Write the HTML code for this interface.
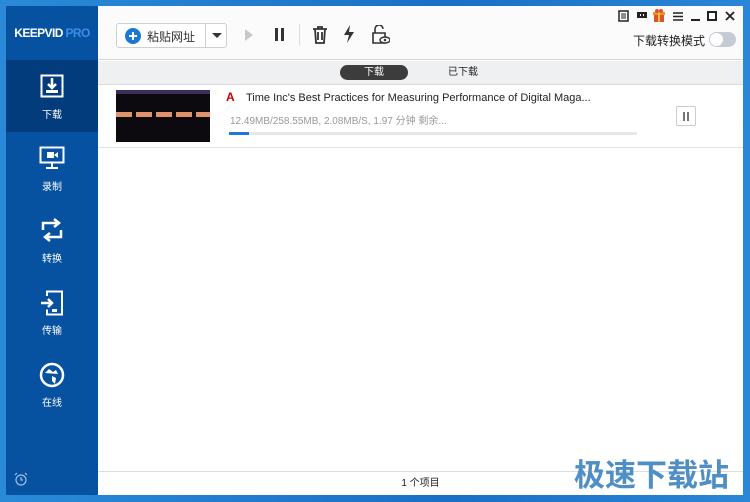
<!DOCTYPE html>
<html><head><meta charset="utf-8"><style>
*{margin:0;padding:0;box-sizing:border-box}
body{width:750px;height:502px;overflow:hidden;position:relative;font-family:"Liberation Sans","Noto Sans CJK SC",sans-serif;background:linear-gradient(90deg,#2a8ad8,#1a6fc6 60%,#2a86d6);}
.side{position:absolute;left:6px;top:6px;width:92px;height:489px;background:#0651a0}
.logo{position:absolute;left:0;top:0;width:92px;height:54px;color:#fff;font-weight:bold;font-size:12px;text-align:center;line-height:54px;letter-spacing:-0.6px;font-family:"Liberation Sans",sans-serif}
.logo span{color:#3d8ee8}
.nav{position:absolute;left:0;width:92px;height:72px;color:#fff;font-size:10px;text-align:center}
.nav.act{background:#033c7c}
.nav svg{display:block;margin:0 auto}
.main{position:absolute;left:98px;top:6px;width:645px;height:489px;background:#fff}
.top{position:absolute;left:0;top:0;width:645px;height:54px;background:#fbfbfb;border-bottom:1px solid #d8d8d8}
.tabs{position:absolute;left:0;top:55px;width:645px;height:24px;background:#eef0f2;border-bottom:1px solid #dcdcdc}
.btn{position:absolute;left:18px;top:17px;width:111px;height:25px;border:1px solid #cfcfcf;border-radius:3px;background:#fff}
.row{position:absolute;left:0;top:80px;width:645px;height:62px;border-bottom:1px solid #e2e2e2}
.bot{position:absolute;left:0;top:465px;width:645px;height:24px;border-top:1px solid #ddd;background:#fff;font-size:10px;text-align:center;line-height:24px;color:#222}
.wm{position:absolute;left:574px;top:450px;font-size:31px;font-weight:bold;color:#4f8fc6;font-family:"Noto Sans CJK SC",sans-serif}
.wc{position:absolute;top:4px}
</style></head><body>
<div class="side">
 <div class="logo">KEEPVID <span>PRO</span></div>
 <div class="nav act" style="top:54px;padding-top:14px">
  <svg width="24" height="24" viewBox="0 0 24 24"><rect x="1.5" y="1.5" width="21" height="21" fill="none" stroke="#fff" stroke-width="2"/><path d="M12 4v10M8 10l4 4 4-4" stroke="#fff" stroke-width="2.5" fill="none"/><rect x="6" y="16" width="12" height="3" fill="#fff"/></svg>
  <div style="margin-top:8px">下载</div></div>
 <div class="nav" style="top:128px;padding-top:12px">
  <svg width="26" height="24" viewBox="0 0 26 24"><rect x="1.5" y="1.5" width="23" height="15" fill="none" stroke="#fff" stroke-width="2"/><rect x="8" y="6" width="7" height="6" fill="#fff"/><path d="M15 9l4-3v6z" fill="#fff"/><path d="M13 17v4M7 22h12" stroke="#fff" stroke-width="2"/></svg>
  <div style="margin-top:8px">录制</div></div>
 <div class="nav" style="top:200px;padding-top:12px">
  <svg width="24" height="24" viewBox="0 0 24 24"><path d="M3 12V5h14M14 1l5 4-5 4M21 12v7H7M10 15l-5 4 5 4" stroke="#fff" stroke-width="2.5" fill="none"/></svg>
  <div style="margin-top:8px">转换</div></div>
 <div class="nav" style="top:272px;padding-top:12px">
  <svg width="24" height="26" viewBox="0 0 24 26"><path d="M7 6V1.5h15v23H7v-5" stroke="#fff" stroke-width="2" fill="none"/><path d="M1 13h11M8 9l4 4-4 4" stroke="#fff" stroke-width="2.5" fill="none"/><rect x="12" y="19" width="5" height="3" fill="#fff"/></svg>
  <div style="margin-top:6px">传输</div></div>
 <div class="nav" style="top:344px;padding-top:12px">
  <svg width="26" height="26" viewBox="0 0 26 26"><circle cx="13" cy="13" r="11" fill="none" stroke="#fff" stroke-width="2.5"/><path d="M6 11l4-4 4 3 3-2 2 4zM13 14l4 2-1 6-3-3z" fill="#fff"/></svg>
  <div style="margin-top:6px">在线</div></div>
 <svg style="position:absolute;left:8px;top:466px" width="14" height="14" viewBox="0 0 14 14"><circle cx="7" cy="8" r="5" fill="none" stroke="#9ec0e8" stroke-width="1.2"/><path d="M7 5v3h2M1 3l2-2M13 3l-2-2" stroke="#9ec0e8" stroke-width="1.2" fill="none"/></svg>
</div>
<div class="main">
 <div class="top">
  <div class="btn">
   <svg style="position:absolute;left:8px;top:4px" width="16" height="16"><circle cx="8" cy="8" r="8" fill="#1a78d6"/><path d="M8 4v8M4 8h8" stroke="#fff" stroke-width="2"/></svg>
   <span style="position:absolute;left:30px;top:4px;font-size:12px;color:#333">粘贴网址</span>
   <div style="position:absolute;left:88px;top:0;width:1px;height:23px;background:#cfcfcf"></div>
   <div style="position:absolute;left:95px;top:9px;border:5px solid transparent;border-top:5px solid #333;border-bottom:0"></div>
  </div>
  <div style="position:absolute;left:147px;top:23px;border:6px solid transparent;border-left:8px solid #c8c8c8;border-right:0"></div>
  <div style="position:absolute;left:177px;top:22px;width:3px;height:13px;background:#333"></div>
  <div style="position:absolute;left:183px;top:22px;width:3px;height:13px;background:#333"></div>
  <div style="position:absolute;left:201px;top:18px;width:1px;height:22px;background:#ddd"></div>
  <svg style="position:absolute;left:214px;top:20px" width="16" height="18" viewBox="0 0 16 18"><path d="M1 3h14M6 3V1h4v2M3 3l1 14h8l1-14M6 6v8M10 6v8" stroke="#333" stroke-width="1.8" fill="none"/></svg>
  <svg style="position:absolute;left:245px;top:19px" width="12" height="18" viewBox="0 0 12 18"><path d="M7 0L1 10h5l-2 8 7-11H6z" fill="#333"/></svg>
  <svg style="position:absolute;left:274px;top:19px" width="18" height="20" viewBox="0 0 18 20"><path d="M3 8V4a4 4 0 0 1 8 0M1 8h12v10H1z" stroke="#333" stroke-width="1.6" fill="none"/><ellipse cx="13" cy="15" rx="5" ry="3" fill="#fff" stroke="#333" stroke-width="1.4"/><circle cx="13" cy="15" r="1.3" fill="#333"/></svg>
  <svg class="wc" style="left:520px" width="11" height="12" viewBox="0 0 11 12"><rect x="1" y="1" width="9" height="10" fill="none" stroke="#222" stroke-width="1.5"/><path d="M3 4h5M3 6h5M3 8h5" stroke="#222"/></svg>
  <svg class="wc" style="left:539px;top:6px" width="10" height="8" viewBox="0 0 10 8"><rect x="0" y="0" width="10" height="6" fill="#222"/><rect x="3" y="2" width="1" height="2" fill="#fff"/><rect x="6" y="2" width="1" height="2" fill="#fff"/></svg>
  <svg class="wc" style="left:555px;top:3px" width="12" height="13" viewBox="0 0 12 13"><rect x="1" y="4" width="10" height="9" fill="#e05030"/><rect x="0" y="3" width="12" height="3" fill="#f09020"/><rect x="5" y="3" width="2" height="10" fill="#f0c040"/><circle cx="4" cy="2" r="2" fill="#e05030"/><circle cx="8" cy="2" r="2" fill="#e05030"/></svg>
  <svg class="wc" style="left:575px;top:6px" width="10" height="9" viewBox="0 0 10 9"><path d="M0 1h10M0 4.5h10M0 8h10" stroke="#222" stroke-width="1.4"/></svg>
  <div style="position:absolute;left:593px;top:13px;width:9px;height:2px;background:#222"></div>
  <div style="position:absolute;left:609px;top:5px;width:10px;height:10px;border:2px solid #222"></div>
  <svg class="wc" style="left:627px;top:5px" width="10" height="10" viewBox="0 0 10 10"><path d="M1 1l8 8M9 1l-8 8" stroke="#222" stroke-width="1.8"/></svg>
  <div style="position:absolute;left:535px;top:26px;font-size:12px;color:#222">下载转换模式</div>
  <div style="position:absolute;left:611px;top:26px;width:27px;height:15px;border-radius:8px;background:#c5cbd2"><div style="position:absolute;left:1px;top:1px;width:13px;height:13px;border-radius:7px;background:#fff"></div></div>
 </div>
 <div class="tabs">
  <div style="position:absolute;left:242px;top:4px;width:68px;height:15px;border-radius:8px;background:#3c3c3c;color:#fff;font-size:10px;text-align:center;line-height:15px">下载</div>
  <div style="position:absolute;left:350px;top:4px;font-size:10px;line-height:15px;color:#222">已下载</div>
 </div>
 <div class="row">
  <div style="position:absolute;left:18px;top:4px;width:94px;height:52px;background:#0c0a0e">
   <div style="height:4px;background:#3a2e5a"></div>
   <div style="position:absolute;left:0;top:22px;width:94px;height:5px;background:repeating-linear-gradient(90deg,#e0926a 0 16px,#0c0a0e 16px 20px)"></div>
  </div>
  <div style="position:absolute;left:128px;top:5px;width:11px;height:12px;background:#fff;color:#c00;font-weight:bold;font-size:12px;line-height:12px">A</div>
  <div style="position:absolute;left:148px;top:6px;font-size:11px;color:#222">Time Inc's Best Practices for Measuring Performance of Digital Maga...</div>
  <div style="position:absolute;left:132px;top:26px;font-size:10px;color:#999">12.49MB/258.55MB, 2.08MB/S, 1.97 分钟 剩余...</div>
  <div style="position:absolute;left:131px;top:46px;width:408px;height:3px;background:#e8e8e8"><div style="width:20px;height:3px;background:#1a78d6"></div></div>
  <div style="position:absolute;left:578px;top:20px;width:20px;height:20px;border:1px solid #ccc;border-radius:2px"><div style="position:absolute;left:6px;top:5px;width:2px;height:9px;background:#777"></div><div style="position:absolute;left:10px;top:5px;width:2px;height:9px;background:#777"></div></div>
 </div>
 <div class="bot">1 个项目</div>
</div>
<div class="wm">极速下载站</div>
</body></html>
